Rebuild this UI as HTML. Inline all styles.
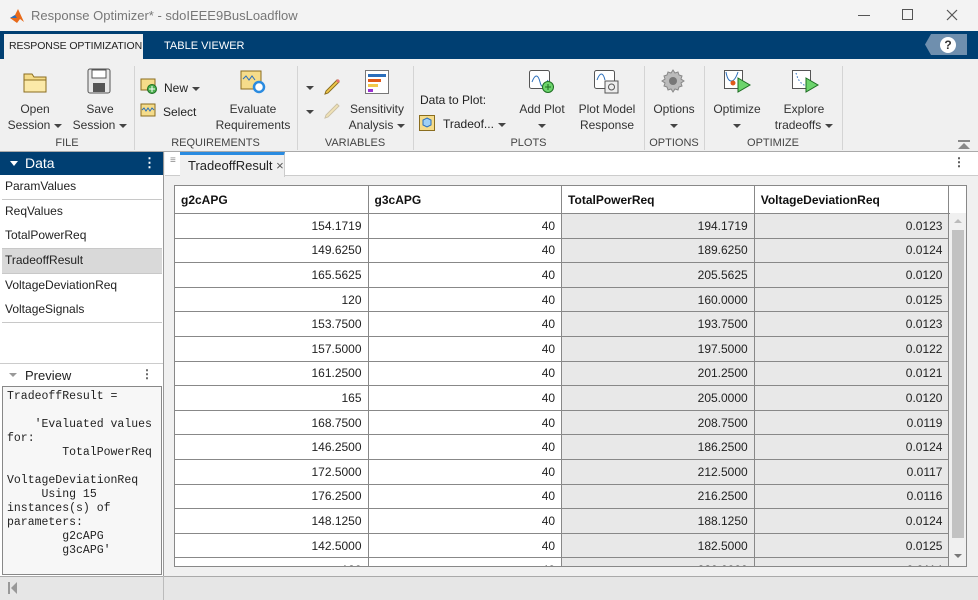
<!DOCTYPE html>
<html><head><style>
*{box-sizing:border-box;margin:0;padding:0}
body{width:978px;height:600px;overflow:hidden;background:#f0f0f0;font-family:"Liberation Sans",sans-serif;font-size:12px;color:#222;position:relative}
.a{position:absolute;white-space:nowrap}
.lbl{position:absolute;text-align:center;font-size:12px;color:#333;line-height:16px;white-space:nowrap}
.grp{position:absolute;top:137px;font-size:11px;color:#444;text-align:center}
.sep{position:absolute;top:66px;width:1px;height:84px;background:#d4d4d4}
.tri{display:inline-block;width:0;height:0;border-left:4px solid transparent;border-right:4px solid transparent;border-top:4px solid #444;vertical-align:middle;margin-left:4px}
.li{position:absolute;left:2px;width:160px;height:25px;border-bottom:1px solid #c8c8c8;padding:4px 3px;font-size:12px;background:#fff}
table{border-collapse:collapse;position:absolute;left:174px;top:185px;font-size:12px}
td,th{border:1px solid #888;height:24.6px;padding:0 6px;text-align:right}
th{height:28px;text-align:left;font-weight:bold;background:#fff;color:#111}
td{background:#fff}
td.g{background:#e8e8e8}
</style></head><body>
<div class="a" style="left:0;top:0;width:978px;height:31px;background:#f3f3f3"></div>
<svg class="a" style="left:9px;top:8px" width="16" height="16" viewBox="0 0 16 16"><path d="M1 10 L6 7 L9 1 L15 14 L11 11 L8 15 Z" fill="#e86a1a"/><path d="M1 10 L6 7 L8 10Z" fill="#2a6ebb"/></svg>
<div class="a" style="left:31px;top:8px;font-size:13px;color:#777">Response Optimizer* - sdoIEEE9BusLoadflow</div>
<div class="a" style="left:858px;top:15px;width:12px;height:1px;background:#555"></div>
<div class="a" style="left:902px;top:9px;width:11px;height:11px;border:1px solid #555"></div>
<svg class="a" style="left:946px;top:9px" width="12" height="12"><path d="M1 1L11 11M11 1L1 11" stroke="#555" stroke-width="1.2"/></svg>
<div class="a" style="left:0;top:31px;width:978px;height:28px;background:#003f72"></div>
<div class="a" style="left:4px;top:34px;width:139px;height:25px;background:#f0f0f0;font-size:10.5px;padding:6px 0 0 5px;color:#222;letter-spacing:-0.1px">RESPONSE OPTIMIZATION</div>
<div class="a" style="left:164px;top:40px;font-size:11px;color:#fff">TABLE VIEWER</div>
<div class="a" style="left:925px;top:34px;width:42px;height:21px;background:#6f8fae;clip-path:polygon(6px 0,100% 0,100% 100%,6px 100%,0 50%)"></div>
<div class="a" style="left:940px;top:37px;width:16px;height:16px;border-radius:50%;background:#fff;color:#333;font-weight:bold;font-size:12px;text-align:center;line-height:16px">?</div>
<div class="sep" style="left:134px"></div><div class="sep" style="left:297px"></div><div class="sep" style="left:413px"></div><div class="sep" style="left:644px"></div><div class="sep" style="left:704px"></div><div class="sep" style="left:842px"></div>
<div class="a" style="left:0;top:151px;width:978px;height:1px;background:#aaa"></div>
<svg class="a" style="left:22px;top:70px" width="28" height="24"><path d="M2 4h8l2 3h12v15H2z" fill="#f5dc8a" stroke="#8a6d1f"/><path d="M2 10h22v12H2z" fill="#fbe9a8" stroke="#8a6d1f"/></svg>
<svg class="a" style="left:87px;top:68px" width="24" height="26"><rect x="1" y="1" width="22" height="24" rx="2" fill="#e8e8e8" stroke="#555"/><rect x="5" y="2" width="14" height="8" fill="#fff" stroke="#555"/><rect x="6" y="15" width="12" height="9" fill="#555"/></svg>
<div class="lbl" style="left:5px;top:101px;width:60px">Open<br>Session<span class="tri"></span></div>
<div class="lbl" style="left:68px;top:101px;width:64px">Save<br>Session<span class="tri"></span></div>
<div class="grp" style="left:0;width:134px">FILE</div>
<svg class="a" style="left:140px;top:78px" width="18" height="16"><rect x="1" y="1" width="14" height="11" fill="#f5dc8a" stroke="#8a6d1f"/><circle cx="12" cy="11" r="4.5" fill="#4caf50" stroke="#1d6d22"/><path d="M12 8v6M9 11h6" stroke="#fff"/></svg>
<div class="a" style="left:164px;top:81px;font-size:12px">New<span class="tri"></span></div>
<svg class="a" style="left:140px;top:103px" width="16" height="14"><rect x="1" y="1" width="14" height="12" fill="#f5dc8a" stroke="#8a6d1f"/><path d="M2 7l2-2 2 3 2-3 2 3 2-3 2 2" stroke="#2a6ebb" fill="none"/></svg>
<div class="a" style="left:163px;top:105px;font-size:12px">Select</div>
<svg class="a" style="left:240px;top:70px" width="26" height="24"><rect x="1" y="1" width="20" height="18" fill="#f5dc8a" stroke="#8a6d1f"/><path d="M3 9l3-3 3 4 3-4 3 4" stroke="#2a6ebb" fill="none"/><circle cx="19" cy="17" r="5" fill="#fff" stroke="#2a8be0" stroke-width="2.5"/></svg>
<div class="lbl" style="left:215px;top:101px;width:76px">Evaluate<br>Requirements</div>
<div class="grp" style="left:134px;width:163px">REQUIREMENTS</div>
<span class="tri a" style="left:302px;top:86px"></span><span class="tri a" style="left:302px;top:110px"></span>
<svg class="a" style="left:323px;top:78px" width="18" height="18"><path d="M2 16l3-1 11-11-2-2L3 13z" fill="#f2c94c" stroke="#8a6d1f"/><path d="M13 3l2 2 2-2-2-2z" fill="#e57373"/></svg>
<svg class="a" style="left:323px;top:102px" width="18" height="18" opacity=".35"><path d="M2 16l3-1 11-11-2-2L3 13z" fill="#f2c94c" stroke="#8a6d1f"/></svg>
<svg class="a" style="left:365px;top:70px" width="24" height="24"><rect x=".5" y=".5" width="23" height="23" fill="#fff" stroke="#777"/><rect x="3" y="4" width="18" height="3" fill="#2a6ebb"/><rect x="3" y="9" width="13" height="3" fill="#e05a1a"/><rect x="3" y="14" width="10" height="3" fill="#f2c94c"/><rect x="3" y="19" width="5" height="3" fill="#9b30d0"/></svg>
<div class="lbl" style="left:343px;top:101px;width:68px">Sensitivity<br>Analysis<span class="tri"></span></div>
<div class="grp" style="left:297px;width:116px">VARIABLES</div>
<div class="a" style="left:420px;top:93px;font-size:12px">Data to Plot:</div>
<svg class="a" style="left:419px;top:115px" width="16" height="16"><rect x=".5" y=".5" width="15" height="15" fill="#f5dc8a" stroke="#8a6d1f"/><path d="M8 3l4 2v5l-4 2-4-2V5z" fill="#9fd0f5" stroke="#2a6ebb"/></svg>
<div class="a" style="left:443px;top:117px;font-size:12px">Tradeof...<span class="tri"></span></div>
<svg class="a" style="left:529px;top:70px" width="26" height="24"><rect x=".5" y=".5" width="20" height="18" rx="2" fill="#fff" stroke="#555"/><path d="M3 12c3-8 6-8 8 0s5 4 8-2" stroke="#2a6ebb" fill="none"/><circle cx="19" cy="17" r="5.5" fill="#6cd46c" stroke="#1d6d22"/><path d="M19 14v6M16 17h6" stroke="#1d6d22"/></svg>
<div class="lbl" style="left:512px;top:101px;width:60px">Add Plot<br><span class="tri" style="margin:0"></span></div>
<svg class="a" style="left:594px;top:70px" width="26" height="24"><rect x=".5" y=".5" width="20" height="18" rx="2" fill="#fff" stroke="#555"/><path d="M3 10c3-8 6-8 8 0" stroke="#2a6ebb" fill="none"/><rect x="11" y="11" width="13" height="12" fill="#eee" stroke="#555"/><circle cx="17.5" cy="17" r="3" fill="none" stroke="#555"/></svg>
<div class="lbl" style="left:574px;top:101px;width:66px">Plot Model<br>Response</div>
<div class="grp" style="left:413px;width:231px">PLOTS</div>
<svg class="a" style="left:661px;top:69px" width="24" height="24" viewBox="0 0 24 24"><path d="M12 1l2 3 3-1 1 3 3 1-1 3 3 2-3 2 1 3-3 1-1 3-3-1-2 3-2-3-3 1-1-3-3-1 1-3-3-2 3-2-1-3 3-1 1-3 3 1z" fill="#bbb" stroke="#888"/><circle cx="12" cy="12" r="4" fill="#777"/></svg>
<div class="lbl" style="left:646px;top:101px;width:56px">Options<br><span class="tri" style="margin:0"></span></div>
<div class="grp" style="left:644px;width:60px">OPTIONS</div>
<svg class="a" style="left:724px;top:70px" width="28" height="24"><rect x=".5" y=".5" width="18" height="18" fill="#fff" stroke="#555"/><path d="M2 2c2 12 8 12 12 0" stroke="#2a6ebb" fill="none"/><circle cx="9" cy="13" r="2.5" fill="#e05a1a"/><path d="M14 8l12 7-12 7z" fill="#6cd46c" stroke="#1d6d22"/></svg>
<div class="lbl" style="left:706px;top:101px;width:62px">Optimize<br><span class="tri" style="margin:0"></span></div>
<svg class="a" style="left:792px;top:70px" width="28" height="24"><rect x=".5" y=".5" width="18" height="18" fill="#fff" stroke="#555"/><path d="M4 3l2 6 4 5 4 2" stroke="#2a6ebb" stroke-dasharray="1.5 2" fill="none"/><path d="M14 8l12 7-12 7z" fill="#6cd46c" stroke="#1d6d22"/></svg>
<div class="lbl" style="left:766px;top:101px;width:76px">Explore<br>tradeoffs<span class="tri"></span></div>
<div class="grp" style="left:704px;width:138px">OPTIMIZE</div>
<div class="a" style="left:958px;top:140px;width:12px;height:2px;background:#888"></div>
<div class="a" style="left:958px;top:143px;width:0;height:0;border-left:6px solid transparent;border-right:6px solid transparent;border-bottom:6px solid #888"></div>
<div class="a" style="left:0;top:152px;width:164px;height:424px;background:#fff;border-right:1px solid #999"></div>
<div class="a" style="left:0;top:152px;width:163px;height:23px;background:#003f72;color:#fff;font-size:14px;padding:3px 0 0 25px">Data</div>
<div class="a" style="left:10px;top:161px;border-left:4px solid transparent;border-right:4px solid transparent;border-top:5px solid #fff"></div>
<div class="a" style="left:143px;top:155px;color:#fff;font-weight:bold;font-size:13px">⋮</div>
<div class="li" style="top:175px">ParamValues</div>
<div class="li" style="top:200px">ReqValues</div>
<div class="li" style="top:224px">TotalPowerReq</div>
<div class="li" style="top:249px;background:#d9d9d9">TradeoffResult</div>
<div class="li" style="top:274px">VoltageDeviationReq</div>
<div class="li" style="top:298px">VoltageSignals</div>
<div class="a" style="left:0;top:363px;width:163px;height:23px;background:#fff;border-top:1px solid #ccc;font-size:13px;padding:4px 0 0 25px">Preview</div>
<div class="a" style="left:9px;top:373px;border-left:4px solid transparent;border-right:4px solid transparent;border-top:4px solid #999"></div>
<div class="a" style="left:141px;top:367px;color:#555;font-weight:bold">⋮</div>
<pre class="a" style="white-space:pre;left:2px;top:386px;width:160px;height:189px;background:#f7f7f7;border:1px solid #888;font-family:'Liberation Mono',monospace;font-size:11.5px;line-height:14px;padding:3px 4px;color:#222;overflow:hidden">TradeoffResult =

    'Evaluated values
for:
        TotalPowerReq

VoltageDeviationReq
     Using 15
instances(s) of
parameters:
        g2cAPG
        g3cAPG'</pre>
<div class="a" style="left:165px;top:152px;width:813px;height:24px;background:#fff;border-bottom:1px solid #ccc"></div>
<div class="a" style="left:170px;top:155px;color:#888;font-size:10px">≡</div>
<div class="a" style="left:180px;top:152px;width:105px;height:25px;background:#f0f0f0;border-top:3px solid #2a8be0;border-right:1px solid #ccc;padding:3px 0 0 8px;font-size:13px">TradeoffResult <span style="color:#555">×</span></div>
<div class="a" style="left:953px;top:155px;font-weight:bold;color:#444">⋮</div>
<div class="a" style="left:174px;top:185px;width:793px;height:382px;overflow:hidden;border:1px solid #888;background:#fff">
<table style="left:-1px;top:-1px">
<tr><th style="width:194px">g2cAPG</th><th style="width:194px">g3cAPG</th><th style="width:193px">TotalPowerReq</th><th style="width:195px">VoltageDeviationReq</th><th style="width:16px;border-right:none"></th></tr>
<tr><td>154.1719</td><td>40</td><td class="g">194.1719</td><td class="g">0.0123</td><td rowspan="16" style="background:#f0f0f0;padding:0;border:none"></td></tr>
<tr><td>149.6250</td><td>40</td><td class="g">189.6250</td><td class="g">0.0124</td></tr>
<tr><td>165.5625</td><td>40</td><td class="g">205.5625</td><td class="g">0.0120</td></tr>
<tr><td>120</td><td>40</td><td class="g">160.0000</td><td class="g">0.0125</td></tr>
<tr><td>153.7500</td><td>40</td><td class="g">193.7500</td><td class="g">0.0123</td></tr>
<tr><td>157.5000</td><td>40</td><td class="g">197.5000</td><td class="g">0.0122</td></tr>
<tr><td>161.2500</td><td>40</td><td class="g">201.2500</td><td class="g">0.0121</td></tr>
<tr><td>165</td><td>40</td><td class="g">205.0000</td><td class="g">0.0120</td></tr>
<tr><td>168.7500</td><td>40</td><td class="g">208.7500</td><td class="g">0.0119</td></tr>
<tr><td>146.2500</td><td>40</td><td class="g">186.2500</td><td class="g">0.0124</td></tr>
<tr><td>172.5000</td><td>40</td><td class="g">212.5000</td><td class="g">0.0117</td></tr>
<tr><td>176.2500</td><td>40</td><td class="g">216.2500</td><td class="g">0.0116</td></tr>
<tr><td>148.1250</td><td>40</td><td class="g">188.1250</td><td class="g">0.0124</td></tr>
<tr><td>142.5000</td><td>40</td><td class="g">182.5000</td><td class="g">0.0125</td></tr>
<tr><td>180</td><td>40</td><td class="g">220.0000</td><td class="g">0.0114</td></tr>
</table>
</div>
<div class="a" style="left:950px;top:213px;width:16px;height:353px;background:#f0f0f0"></div>
<div class="a" style="left:952px;top:230px;width:12px;height:308px;background:#c2c2c2"></div>
<div class="a" style="left:954px;top:219px;border-left:4px solid transparent;border-right:4px solid transparent;border-bottom:4px solid #bbb"></div>
<div class="a" style="left:954px;top:554px;border-left:4px solid transparent;border-right:4px solid transparent;border-top:4px solid #777"></div>
<div class="a" style="left:0;top:576px;width:978px;height:24px;background:#e6e6e6;border-top:1px solid #aaa"></div>
<div class="a" style="left:163px;top:576px;width:1px;height:24px;background:#bbb"></div>
<div class="a" style="left:8px;top:582px;width:2px;height:12px;background:#999"></div>
<div class="a" style="left:11px;top:582px;border-top:6px solid transparent;border-bottom:6px solid transparent;border-right:6px solid #999"></div>
</body></html>
